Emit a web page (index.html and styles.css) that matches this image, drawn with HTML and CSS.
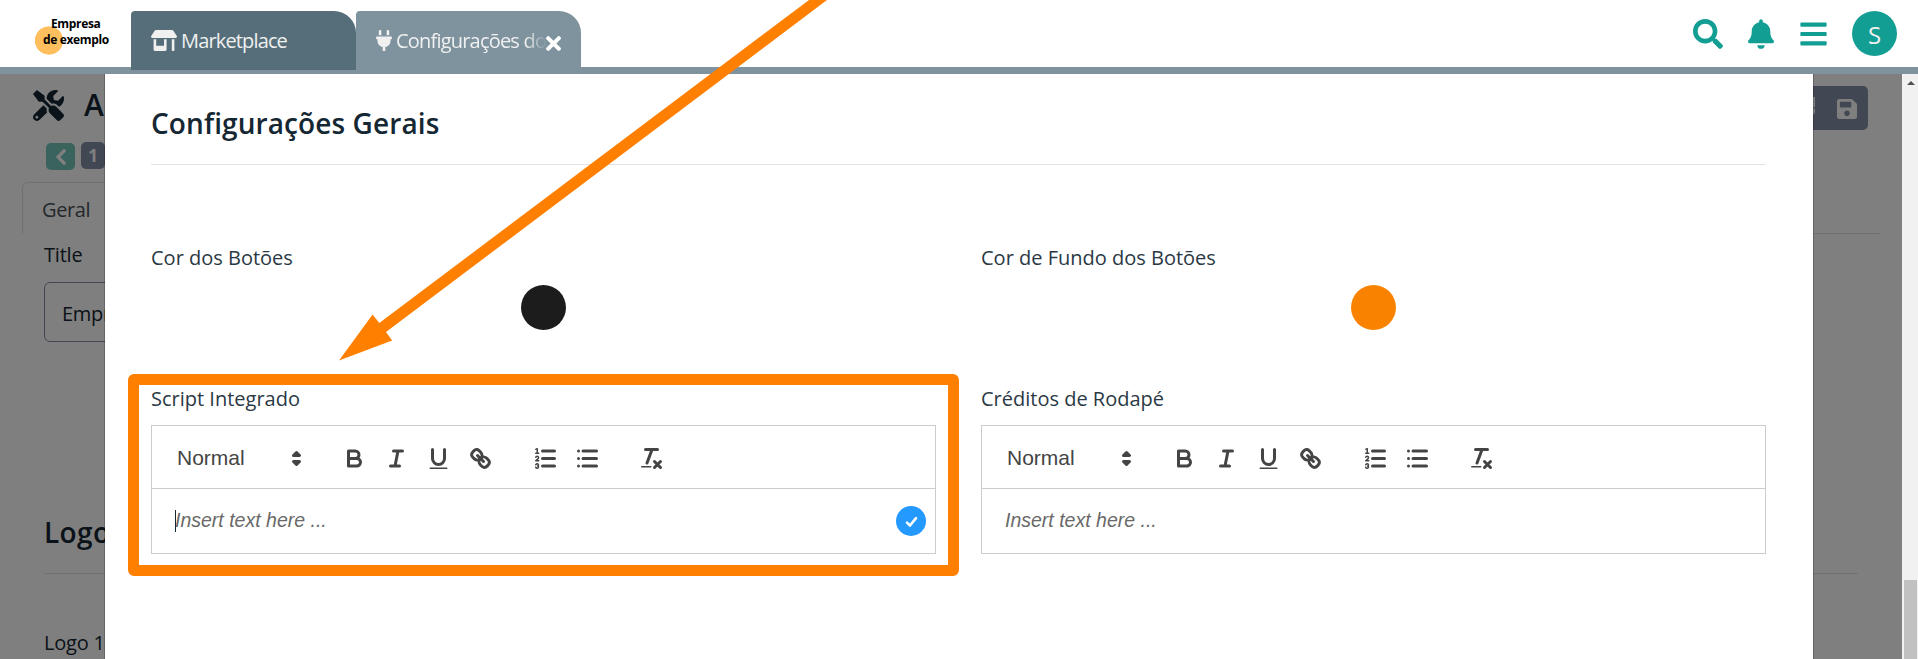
FILE: index.html
```html
<!DOCTYPE html>
<html lang="pt-BR">
<head>
<meta charset="utf-8">
<title>Configurações</title>
<link rel="stylesheet" href="styles.css">
</head>
<body>
<svg class="sprite" aria-hidden="true">
  <symbol id="q-sort" viewBox="0 0 18 18"><polygon class="qs qf" points="7 11 9 13 11 11 7 11"/><polygon class="qs qf" points="7 7 9 5 11 7 7 7"/></symbol>
  <symbol id="q-bold" viewBox="0 0 18 18"><path class="qs" d="M5,4H9.5A2.5,2.5,0,0,1,12,6.5v0A2.5,2.5,0,0,1,9.5,9H5V4Z"/><path class="qs" d="M5,9h5.5A2.5,2.5,0,0,1,13,11.5v0A2.5,2.5,0,0,1,10.5,14H5V9Z"/></symbol>
  <symbol id="q-italic" viewBox="0 0 18 18"><path class="qs" d="M7 4H13M5 14H11M8 14L10 4"/></symbol>
  <symbol id="q-under" viewBox="0 0 18 18"><path class="qs" d="M5,3V9a4.012,4.012,0,0,0,4,4H9a4.012,4.012,0,0,0,4-4V3"/><rect class="qf" x="3" y="15" width="12" height="1" rx=".5"/></symbol>
  <symbol id="q-link" viewBox="0 0 18 18"><path class="qs" d="M7 7L11 11"/><path class="qs" d="M8.9,4.577a3.476,3.476,0,0,1,.36,4.679A3.476,3.476,0,0,1,4.577,8.9C3.185,7.5,2.035,6.4,4.217,4.217S7.5,3.185,8.9,4.577Z"/><path class="qs" d="M13.423,9.1a3.476,3.476,0,0,0-4.679-.36,3.476,3.476,0,0,0,.36,4.679c1.392,1.392,2.5,2.542,4.679.36S14.815,10.5,13.423,9.1Z"/></symbol>
  <symbol id="q-ol" viewBox="0 0 18 18"><path class="qs" d="M7 4H15M7 9H15M7 14H15"/><path class="qt" d="M2.5 5.5H4.5"/><path class="qf" d="M3.5,6A0.5,0.5,0,0,1,3,5.5V3.085l-0.276.138A0.5,0.5,0,0,1,2.053,3c-0.124-.247-0.023-0.324.224-0.447l1-.5A0.5,0.5,0,0,1,4,2.5v3A0.5,0.5,0,0,1,3.5,6Z"/><path class="qt" d="M4.5,10.5h-2c0-.234,1.85-1.076,1.85-2.234A0.959,0.959,0,0,0,2.5,8.156"/><path class="qt" d="M2.5,14.846a0.959,0.959,0,0,0,1.85-.109A0.7,0.7,0,0,0,3.75,14a0.688,0.688,0,0,0,.6-0.736,0.959,0.959,0,0,0-1.85-.109"/></symbol>
  <symbol id="q-ul" viewBox="0 0 18 18"><path class="qs" d="M6 4H15M6 9H15M6 14H15M3 4H3M3 9H3M3 14H3"/></symbol>
  <symbol id="q-clean" viewBox="0 0 18 18"><path class="qs" d="M5 3H13M6 12L9.35 3M11 11L15 15M15 11L11 15"/><rect class="qf" x="2" y="14" width="7" height="1" rx=".5"/></symbol>
</svg>

<header class="topbar">
  <div class="brand"><span>Empresa</span><span>de exemplo</span></div>
  <nav class="tabs">
    <div class="tab tab-market">
      <svg class="ic-store" viewBox="0 0 640 512"><path d="M320 384H128V224H64v256c0 17.7 14.3 32 32 32h256c17.7 0 32-14.3 32-32V224h-64v160zm314.6-241.8l-85.3-128c-6-8.9-16-14.2-26.7-14.2H117.4c-10.7 0-20.7 5.3-26.6 14.2l-85.3 128c-14.2 21.3 1 49.8 26.6 49.8H608c25.5 0 40.7-28.5 26.6-49.8zM512 496c0 8.8 7.2 16 16 16h32c8.8 0 16-7.2 16-16V224h-64v272z"/></svg>
      <span class="tab-text">Marketplace</span>
    </div>
    <div class="tab tab-config">
      <svg class="ic-plug" viewBox="0 0 384 512"><path d="M320,32a32,32,0,0,0-64,0v96h64Zm48,128H16A16,16,0,0,0,0,176v32a16,16,0,0,0,16,16H32v32A160.07,160.07,0,0,0,160,412.8V512h64V412.8A160.07,160.07,0,0,0,352,256V224h16a16,16,0,0,0,16-16V176A16,16,0,0,0,368,160ZM128,32a32,32,0,0,0-64,0v96h64Z"/></svg>
      <span class="tab-text tab-fade">Configurações do</span>
      <svg class="ic-close" viewBox="0 80 352 352"><path d="M242.72 256l100.07-100.07c12.28-12.28 12.28-32.19 0-44.48l-22.24-22.24c-12.28-12.28-32.19-12.28-44.48 0L176 189.28 75.93 89.21c-12.28-12.28-32.19-12.28-44.48 0L9.21 111.45c-12.28 12.28-12.28 32.19 0 44.48L109.28 256 9.21 356.07c-12.28 12.28-12.28 32.19 0 44.48l22.24 22.24c12.28 12.28 32.2 12.28 44.48 0L176 322.72l100.07 100.07c12.28 12.28 32.2 12.28 44.48 0l22.24-22.24c12.28-12.28 12.28-32.19 0-44.48L242.72 256z"/></svg>
    </div>
  </nav>
  <div class="actions">
    <svg class="ic-search" viewBox="0 0 512 512"><path d="M505 442.7L405.3 343c-4.5-4.5-10.6-7-17-7H372c27.6-35.3 44-79.7 44-128C416 93.1 322.9 0 208 0S0 93.1 0 208s93.1 208 208 208c48.3 0 92.7-16.4 128-44v16.3c0 6.4 2.5 12.5 7 17l99.7 99.7c9.4 9.4 24.6 9.4 33.9 0l28.3-28.3c9.4-9.4 9.4-24.6.1-34zM208 336c-70.7 0-128-57.2-128-128 0-70.7 57.2-128 128-128 70.7 0 128 57.2 128 128 0 70.7-57.2 128-128 128z"/></svg>
    <svg class="ic-bell" viewBox="0 0 448 512"><path d="M224 512c35.32 0 63.97-28.65 63.97-64H160.03c0 35.35 28.65 64 63.97 64zm215.39-149.71c-19.32-20.76-55.47-51.99-55.47-154.29 0-77.7-54.48-139.9-127.94-155.16V32c0-17.67-14.32-32-31.98-32s-31.98 14.33-31.98 32v20.84C118.56 68.1 64.08 130.3 64.08 208c0 102.3-36.15 133.53-55.47 154.29-6 6.45-8.66 14.16-8.61 21.71.11 16.4 12.98 32 32.1 32h383.8c19.12 0 32-15.6 32.1-32 .05-7.55-2.61-15.27-8.61-21.71z"/></svg>
    <svg class="ic-bars" viewBox="0 0 448 512"><rect y="60" width="448" height="72" rx="16"/><rect y="220" width="448" height="72" rx="16"/><rect y="380" width="448" height="72" rx="16"/></svg>
    <div class="avatar">S</div>
  </div>
</header>

<main class="stage">
  <div class="page">
    <div class="page-head">
      <svg class="ic-tools" viewBox="0 0 512 512"><path d="M501.1 395.7L384 278.6c-23.1-23.1-57.6-27.6-85.4-13.9L192 158.1V96L64 0 0 64l96 128h62.1l106.6 106.6c-13.6 27.8-9.2 62.3 13.9 85.4l117.1 117.1c14.6 14.6 38.2 14.6 52.7 0l52.7-52.7c14.5-14.6 14.5-38.2 0-52.7zM331.7 225c28.3 0 54.9 11 74.9 31l19.4 19.4c15.8-6.9 30.8-16.5 43.8-29.5 37.1-37.1 49.7-89.3 37.9-136.7-2.2-9-13.5-12.1-20.1-5.5l-74.4 74.4-67.9-11.3L334 98.9l74.4-74.4c6.6-6.6 3.4-17.9-5.7-20.2-47.4-11.7-99.6.9-136.6 37.9-28.5 28.5-41.9 66.1-41.2 103.6l82.1 82.1c8.1-1.9 16.5-2.9 24.7-2.9zm-103.9 82l-56.7-56.7L18.7 402.8c-25 25-25 65.5 0 90.5s65.5 25 90.5 0l123.6-123.6c-7.6-19.9-9.9-41.6-5-62.7zM64 472c-13.2 0-24-10.8-24-24 0-13.3 10.7-24 24-24s24 10.7 24 24c0 13.2-10.7 24-24 24z"/></svg>
      <h1>A</h1>
      <div class="page-tools">
        <svg class="ic-bang" viewBox="0 0 8 20"><rect x="0" y="0" width="8" height="10"/><circle cx="4" cy="14" r="4"/></svg>
        <svg class="ic-save" viewBox="0 32 448 448"><path d="M433.941 129.941l-83.882-83.882A48 48 0 0 0 316.118 32H48C21.49 32 0 53.49 0 80v352c0 26.51 21.49 48 48 48h352c26.51 0 48-21.49 48-48V163.882a48 48 0 0 0-14.059-33.941zM224 416c-35.346 0-64-28.654-64-64 0-35.346 28.654-64 64-64s64 28.654 64 64c0 35.346-28.654 64-64 64zm96-304.52V212c0 6.627-5.373 12-12 12H76c-6.627 0-12-5.373-12-12V108c0-6.627 5.373-12 12-12h228.52c3.183 0 6.235 1.264 8.485 3.515l3.48 3.48A11.996 11.996 0 0 1 320 111.48z"/></svg>
      </div>
    </div>
    <div class="pager">
      <span class="pg pg-back"><svg viewBox="0 0 320 512"><path d="M34.52 239.03L228.87 44.69c9.37-9.37 24.57-9.37 33.94 0l22.67 22.67c9.36 9.36 9.37 24.52.04 33.9L131.49 256l154.02 154.75c9.34 9.38 9.32 24.54-.04 33.9l-22.67 22.67c-9.37 9.37-24.57 9.37-33.94 0L34.52 272.97c-9.37-9.37-9.37-24.57 0-33.94z"/></svg></span>
      <span class="pg pg-num">1</span>
    </div>
    <div class="page-tabs"><span class="page-tab">Geral</span><span class="page-tabs-line"></span></div>
    <div class="page-form">
      <div class="page-label">Title</div>
      <div class="page-input">Empr</div>
      <h2 class="page-title">Logo</h2>
      <div class="page-label page-label-logo">Logo 1</div>
    </div>
  </div>
  <div class="scrollbar"><span class="scroll-up"></span><span class="scroll-thumb"></span></div>

  <div class="backdrop"></div>
  <section class="modal">
    <h2 class="modal-title">Configurações Gerais</h2>
    <div class="grid">
      <div class="field field-color">
        <div class="label">Cor dos Botões</div>
        <span class="swatch swatch-dark"></span>
      </div>
      <div class="field field-color">
        <div class="label">Cor de Fundo dos Botões</div>
        <span class="swatch swatch-orange"></span>
      </div>
      <div class="field">
        <div class="label">Script Integrado</div>
        <div class="editor">
          <div class="toolbar">
            <div class="picker"><span>Normal</span><svg><use href="#q-sort"/></svg></div>
            <div class="group"><svg><use href="#q-bold"/></svg><svg><use href="#q-italic"/></svg><svg><use href="#q-under"/></svg><svg><use href="#q-link"/></svg></div>
            <div class="group"><svg><use href="#q-ol"/></svg><svg><use href="#q-ul"/></svg></div>
            <div class="group"><svg><use href="#q-clean"/></svg></div>
          </div>
          <div class="editable"><span class="caret"></span><span class="hint">Insert text here ...</span>
            <span class="check"><svg viewBox="0 0 30 30"><path d="M11 16.6L14 19.5L20 12.2"/></svg></span>
          </div>
        </div>
      </div>
      <div class="field">
        <div class="label">Créditos de Rodapé</div>
        <div class="editor">
          <div class="toolbar">
            <div class="picker"><span>Normal</span><svg><use href="#q-sort"/></svg></div>
            <div class="group"><svg><use href="#q-bold"/></svg><svg><use href="#q-italic"/></svg><svg><use href="#q-under"/></svg><svg><use href="#q-link"/></svg></div>
            <div class="group"><svg><use href="#q-ol"/></svg><svg><use href="#q-ul"/></svg></div>
            <div class="group"><svg><use href="#q-clean"/></svg></div>
          </div>
          <div class="editable"><span class="hint">Insert text here ...</span></div>
        </div>
      </div>
    </div>
  </section>
</main>

<div class="highlight"></div>
<svg class="arrow" viewBox="0 0 1918 659"><polygon points="339,360.5 372.6,314.6 379.3,323 809,0 827,0 386,332 392.2,340.6"/></svg>
</body>
</html>
```

FILE: styles.css
```css
* { box-sizing: border-box; }
body {
  margin: 0;
  height: 659px;
  overflow: hidden;
  position: relative;
  display: flex;
  flex-direction: column;
  background: #fff;
  color: #152733;
  font-family: "Open Sans", "Noto Sans", sans-serif;
  font-size: 20px;
}
h1, h2 { margin: 0; font-weight: 600; }
svg { display: block; flex: none; }
.sprite { position: absolute; width: 0; height: 0; }

/* Top bar */
.topbar {
  flex: none;
  height: 74px;
  display: flex;
  align-items: flex-start;
  background: linear-gradient(#fff 67px, #7e939e 67px);
}
.brand {
  width: 131px;
  padding: 16px 0 0 43px;
  display: flex;
  flex-direction: column;
  font: 700 12px/16px "Open Sans", sans-serif;
  letter-spacing: -.35px;
  color: #000;
  white-space: nowrap;
  background: radial-gradient(circle at 49px 40.5px, #ffbf5e 13.8px, transparent 14.4px);
  height: 67px;
}
.brand span:first-child { padding-left: 8px; }
.tabs { display: flex; padding-top: 11px; }
.tab {
  width: 225px;
  display: flex;
  align-items: flex-start;
  border-radius: 4px 22px 0 0;
  color: #f0f0f0;
}
.tab svg { fill: #f0f0f0; }
.tab-market { height: 59px; background: #566e79; padding-left: 20px; }
.tab-config { height: 63px; background: #7e939e; padding-left: 20px; }
.ic-store { width: 26px; height: 21px; margin-top: 19px; }
.ic-plug { width: 16px; height: 21px; margin-top: 19px; }
.tab-text { line-height: 30px; margin: 15px 0 0 4px; white-space: nowrap; letter-spacing: -.85px; }
.tab-fade {
  width: 154px;
  margin-right: -5px;
  letter-spacing: -.8px;
  -webkit-mask-image: linear-gradient(90deg, #000 84%, transparent 98%);
  mask-image: linear-gradient(90deg, #000 84%, transparent 98%);
}
.tab .ic-close { width: 15px; height: 15px; margin: 25px 0 0 1px; fill: #fff; }
.actions { margin-left: auto; display: flex; align-items: flex-start; padding-right: 21px; }
.actions svg { fill: #139e94; }
.ic-search { width: 30px; height: 30px; margin-top: 19px; }
.ic-bell { width: 26px; height: 30px; margin: 19px 0 0 25px; }
.ic-bars { width: 27px; height: 30px; margin: 18.5px 0 0 26px; }
.avatar {
  width: 45px; height: 45px; margin: 11px 0 0 25px;
  border-radius: 50%;
  background: #139e94;
  color: #f0f0f0;
  font-size: 24px; line-height: 48px;
  text-align: center;
}

/* Page under the dialog */
.stage { position: relative; flex: 1; display: flex; min-height: 0; overflow: hidden; }
.page { flex: 1; display: flex; flex-direction: column; background: #fff; }
.page-head { height: 68px; display: flex; padding: 12px 34px 0 33px; }
.ic-tools { width: 31px; height: 31px; margin-top: 4px; fill: #152733; }
.page-head h1 { margin-left: 20px; font-size: 30px; line-height: 38px; }
.page-tools {
  margin-left: auto;
  width: 80px; height: 44px;
  display: flex; justify-content: space-between;
  padding: 13px 11px 0 19px;
  border-radius: 5px;
  background: #8490a6;
}
.page-tools svg { fill: #fff; }
.ic-bang { width: 8px; height: 20px; margin-top: -2px; }
.ic-save { width: 20px; height: 20px; }
.pager { display: flex; gap: 6px; padding-left: 46px; height: 40px; }
.pg {
  width: 29px; height: 27px;
  margin-top: 1px;
  border-radius: 5px;
  display: flex; align-items: center; justify-content: center;
  color: #fff;
  font-weight: 700; font-size: 17px;
}
.pg-back { background: #72c7b9; }
.pg-back svg { height: 18px; width: 12px; fill: #fff; stroke: #fff; stroke-width: 20; }
.pg-num { margin-top: 0; width: 24px; background: #8490a6; }
.page-tabs { display: flex; align-items: flex-end; padding: 0 22px; height: 52px; }
.page-tab {
  width: 110px; height: 52px;
  padding: 15px 0 0 19px;
  border: 1px solid #dee2e6; border-bottom: 0;
  border-radius: 6px 6px 0 0;
  line-height: 24px;
  letter-spacing: -.4px;
  color: #495057;
}
.page-tabs-line { flex: 1; border-bottom: 1px solid #dee2e6; }
.page-form { padding: 6px 44px 0; }
.page-label { line-height: 30px; letter-spacing: -.2px; }
.page-input {
  margin-top: 12px;
  width: 800px;
  height: 60px;
  padding: 15px 17px;
  border: 1px solid #8490a6;
  border-radius: 6px;
  line-height: 31px;
  letter-spacing: -.3px;
}
.page-title { margin-top: 169px; padding-bottom: 20px; border-bottom: 1px solid #dee2e6; font-size: 28px; line-height: 42px; letter-spacing: .4px; }
.page-label-logo { margin-top: 54px; }
.backdrop { position: absolute; inset: 0 16px 0 0; background: rgba(0, 0, 0, .5); }
.scrollbar { width: 16px; background: #f1f1f1; display: flex; flex-direction: column; align-items: center; padding: 7px 0 0 1px; }
.scroll-up { border: 4px solid transparent; border-top: 0; border-bottom-color: #505050; }
.scroll-thumb { width: 13px; height: 79px; margin-top: auto; background: #c1c1c1; }

/* Dialog */
.modal {
  position: absolute;
  inset: 0 104px 0 104px;
  padding: 29px 47px 0 46px;
  background: #fff;
  background-clip: padding-box;
  border: solid rgba(0, 0, 0, .2);
  border-width: 0 1px;
}
.modal-title {
  padding-bottom: 21px;
  border-bottom: 1px solid #e3e3e3;
  font-size: 28px;
  line-height: 40px;
  letter-spacing: .1px;
}
.grid { display: grid; grid-template-columns: 785px 785px; column-gap: 45px; padding-top: 78px; }
.field-color { height: 141px; display: flex; flex-direction: column; }
.label { line-height: 30px; white-space: nowrap; color: #2a3944; }
.swatch { width: 45px; height: 45px; margin: 12px auto 0; border-radius: 50%; }
.swatch-dark { background: #1c1c1c; }
.swatch-orange { background: #f98200; }
.editor { margin-top: 11px; height: 129px; border: 1px solid #ccc; font-family: "Liberation Sans", Arial, sans-serif; }
.toolbar { height: 63px; display: flex; align-items: center; gap: 37.5px; padding: 3px 0 0 25px; border-bottom: 1px solid #ccc; color: #444; }
.toolbar svg { width: 27px; height: 27px; }
.picker { width: 133px; display: flex; align-items: center; justify-content: space-between; font-size: 21px; }
.picker span { margin-top: -2px; }
.group { display: flex; gap: 15.2px; }
.picker + .group { margin-left: -7px; }
.qs { fill: none; stroke: #444; stroke-width: 2; stroke-linecap: round; stroke-linejoin: round; }
.qt { fill: none; stroke: #444; stroke-width: 1; stroke-linecap: round; stroke-linejoin: round; }
.qf { fill: #444; }
.editable { height: 64px; display: flex; align-items: center; padding: 0 9px 0 23px; }
.caret { width: 1px; height: 22px; background: #152733; margin-right: -1px; }
.hint { font-size: 19.5px; line-height: 28px; font-style: italic; color: #696969; margin-top: -2px; }
.check { width: 30px; height: 30px; margin-left: auto; border-radius: 50%; background: #2499ff; }
.check path { fill: none; stroke: #fff; stroke-width: 2.6; stroke-linecap: round; stroke-linejoin: round; }

/* Annotation overlay */
.highlight { position: absolute; left: 128px; top: 374px; width: 831px; height: 202px; border: 11px solid #ff8000; border-radius: 6px; }
.arrow { position: absolute; left: 0; top: 0; width: 1918px; height: 659px; fill: #ff8000; }
```
